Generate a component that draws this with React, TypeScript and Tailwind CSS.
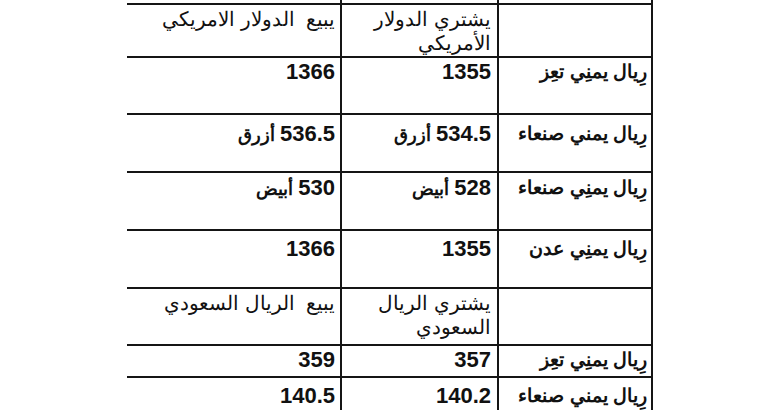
import React from "react";

const F = { fontFamily: '"Liberation Sans", sans-serif' };

type Cell = { n?: string; a?: string };
type Row = { h: string; pt: string; cells: Cell[]; header?: boolean };

const rows: Row[] = [
  { h: "h-[51px]", pt: "pt-[2px]", cells: [{}, { a: "يشتري الدولار الأمريكي" }, { a: "يبيع  الدولار الامريكي" }], header: true },
  { h: "h-[55px]", pt: "pt-[1px]", cells: [{ a: "رِيال يمنِي تعِز" }, { n: "1355" }, { n: "1366" }] },
  { h: "h-[56px]", pt: "pt-[6px]", cells: [{ a: "رِيال يمني صنعاء" }, { n: "534.5", a: "أزرق" }, { n: "536.5", a: "أزرق" }] },
  { h: "h-[56px]", pt: "pt-[2px]", cells: [{ a: "رِيال يمنِي صنعاء" }, { n: "528", a: "أبيض" }, { n: "530", a: "أبيض" }] },
  { h: "h-[56px]", pt: "pt-[5px]", cells: [{ a: "رِيال يمنِي عدن" }, { n: "1355" }, { n: "1366" }] },
  { h: "h-[55px]", pt: "pt-[2px]", cells: [{}, { a: "يشتري الريال السعودي" }, { a: "يبيع  الريال السعودي" }], header: true },
  { h: "h-[30px]", pt: "pt-[1px]", cells: [{ a: "رِيال يمنِي تعِز" }, { n: "357" }, { n: "359" }] },
  { h: "h-[40px]", pt: "pt-[5px]", cells: [{ a: "رِيال يمني صنعاء" }, { n: "140.2" }, { n: "140.5" }] },
];

export default function App() {
  return (
    <div className="w-[760px] h-[410px] overflow-hidden bg-white" style={F} lang="ar">
      <div className="pl-[127px]">
        <div
          dir="rtl"
          className="grid w-[526px] grid-cols-[152px_155px_213px] gap-[2px] bg-[#151515] px-[2px] text-[#111]"
        >
          <div className="h-[3px] bg-white" />
          <div className="h-[3px] bg-white" />
          <div className="h-[3px] bg-white -ml-[2px]" />
          {rows.map((r, i) =>
            r.cells.map((c, j) => (
              <div
                key={i + "-" + j}
                className={`${r.h} ${r.pt} bg-white text-right whitespace-pre-wrap ${
                  j === 0 ? "pr-[4px] text-[19px]" : j === 1 ? "pr-[6px] text-[18px]" : "pr-[5px] text-[18px]"
                } ${
                  r.header
                    ? "!text-[20px] leading-[24px] font-normal"
                    : "leading-[25px] font-bold"
                }`}
              >
                {c.n && <span className="text-[22px]">{c.n}</span>}
                {c.n && c.a ? " " : null}
                {c.a && <span>{c.a}</span>}
              </div>
            ))
          )}
        </div>
      </div>
    </div>
  );
}
